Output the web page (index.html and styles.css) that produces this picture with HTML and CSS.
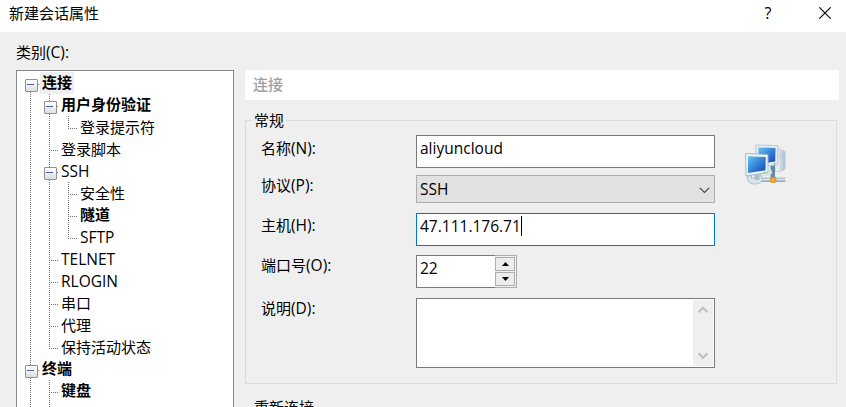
FILE: index.html
```html
<!DOCTYPE html>
<html lang="zh-CN">
<head>
<meta charset="utf-8">
<title>新建会话属性</title>
<link rel="stylesheet" href="styles.css">
</head>
<body>
<div class="dialog">
  <header class="titlebar">
    <span class="title">新建会话属性</span>
    <span class="help">?</span>
    <svg class="close" width="12" height="12" viewBox="0 0 12 12"><path d="M0.3 0.3L11.7 11.7M11.7 0.3L0.3 11.7" fill="none" stroke="#000" stroke-width="1.1"/></svg>
  </header>
  <main class="body">
    <section class="side">
      <div class="side-label">类别<span class="lat">(C):</span></div>
      <div class="tree">
        <div class="row"><i class="cell box first"></i><span class="name bold selected">连接</span></div>
        <div class="row"><i class="cell v"></i><i class="cell box"></i><span class="name bold">用户身份验证</span></div>
        <div class="row"><i class="cell v"></i><i class="cell v"></i><i class="cell l"></i><span class="name">登录提示符</span></div>
        <div class="row"><i class="cell v"></i><i class="cell v h"></i><span class="name">登录脚本</span></div>
        <div class="row"><i class="cell v"></i><i class="cell box"></i><span class="name lat">SSH</span></div>
        <div class="row"><i class="cell v"></i><i class="cell v"></i><i class="cell v h"></i><span class="name">安全性</span></div>
        <div class="row"><i class="cell v"></i><i class="cell v"></i><i class="cell v h"></i><span class="name bold">隧道</span></div>
        <div class="row"><i class="cell v"></i><i class="cell v"></i><i class="cell l"></i><span class="name lat">SFTP</span></div>
        <div class="row"><i class="cell v"></i><i class="cell v h"></i><span class="name lat">TELNET</span></div>
        <div class="row"><i class="cell v"></i><i class="cell v h"></i><span class="name lat">RLOGIN</span></div>
        <div class="row"><i class="cell v"></i><i class="cell v h"></i><span class="name">串口</span></div>
        <div class="row"><i class="cell v"></i><i class="cell v h"></i><span class="name">代理</span></div>
        <div class="row"><i class="cell v"></i><i class="cell l"></i><span class="name">保持活动状态</span></div>
        <div class="row"><i class="cell box"></i><span class="name bold">终端</span></div>
        <div class="row"><i class="cell v"></i><i class="cell v h"></i><span class="name bold">键盘</span></div>
        <div class="row"><i class="cell v"></i><i class="cell v"></i></div>
      </div>
    </section>
    <section class="page">
      <div class="heading">连接</div>
      <div class="group">
        <div class="legend">常规</div>
        <div class="form">
          <div class="labels">
            <span class="label">名称<span class="lat">(N):</span></span>
            <span class="label protocol">协议<span class="lat">(P):</span></span>
            <span class="label host">主机<span class="lat">(H):</span></span>
            <span class="label port">端口号<span class="lat">(O):</span></span>
            <span class="label desc">说明<span class="lat">(D):</span></span>
          </div>
          <div class="fields">
            <div class="field lat">aliyuncloud</div>
            <div class="field select lat"><span>SSH</span>
              <svg width="11" height="7" viewBox="0 0 11 7"><path d="M.8.8L5.5 5.5L10.2.8" fill="none" stroke="#444" stroke-width="1.2"/></svg>
            </div>
            <div class="field focus lat"><span>47.111.176.71</span><i class="caret"></i></div>
            <div class="field spin lat"><span class="value">22</span>
              <div class="buttons">
                <i class="btn"><svg width="7" height="4" viewBox="0 0 7 4"><path d="M0 4L3.5 0L7 4Z"/></svg></i>
                <i class="btn"><svg width="7" height="4" viewBox="0 0 7 4"><path d="M0 0H7L3.5 4Z"/></svg></i>
              </div>
            </div>
            <div class="field area">
              <div class="scroll">
                <svg width="10" height="8" viewBox="0 0 10 8"><path d="M.5 6.3L5 1.8L9.5 6.3" fill="none" stroke="#bfbfbf" stroke-width="2.2"/></svg>
                <svg width="10" height="8" viewBox="0 0 10 8"><path d="M.5 1.3L5 5.8L9.5 1.3" fill="none" stroke="#bfbfbf" stroke-width="2.2"/></svg>
              </div>
            </div>
          </div>
          <svg class="computers" width="41" height="42" viewBox="0.5 0 41 42">
            <defs>
              <linearGradient id="screen" x1="0" y1="0" x2="1" y2="1"><stop offset="0" stop-color="#62c5ee"/><stop offset=".5" stop-color="#3483d8"/><stop offset="1" stop-color="#173fb5"/></linearGradient>
              <linearGradient id="tower" x1="0" y1="0" x2="1" y2="0"><stop offset="0" stop-color="#fafdff"/><stop offset="1" stop-color="#aebdca"/></linearGradient>
              <linearGradient id="pipe" x1="0" y1="0" x2="0" y2="1"><stop offset="0" stop-color="#8ea4b4"/><stop offset=".4" stop-color="#e2ebf1"/><stop offset="1" stop-color="#71899c"/></linearGradient>
            </defs>
            <path d="M33 5L39 6.5L40.5 8V25L35 28L31 27Z" fill="url(#tower)" stroke="#b4c2ce" stroke-width=".7"/>
            <path d="M34.5 11L39.5 11M34.5 14L39.5 14" stroke="#b5c5d2" stroke-width=".8"/>
            <path d="M26 21H30.5V34H26Z" fill="#648ba6"/>
            <path d="M11.5 1L33.5 1.7L33 20.5L11.5 24Z" fill="#e8f0f3" stroke="#a9bdca" stroke-width=".8"/>
            <path d="M14 3.5L31 4L30.7 17.5L14 20Z" fill="url(#screen)"/>
            <path d="M4 30C1 36 5 40 10 40C16 40 19 37 17 33L16 29H11V34H7V30Z" fill="#d9e3e9" stroke="#9eb1bd" stroke-width=".8"/>
            <path d="M10 29H15V36H10Z" fill="#a9c0cd"/>
            <path d="M18 29L26 25L28 29L24 32H18Z" fill="#dbe4e8"/>
            <rect x="17" y="33.8" width="24" height="4" rx="1" fill="url(#pipe)"/>
            <path d="M1 9.5L23.5 10.5L23.5 28.5L1.5 32Z" fill="#edf4f6" stroke="#a0b5c2" stroke-width=".9"/>
            <path d="M3.5 12.3L21.2 13L21 26.2L3.5 29Z" fill="url(#screen)"/>
            <path d="M19 28.5L21 28M29 19.7L31 19.3" stroke="#7bd52c" stroke-width="1.2"/>
            <rect x="26" y="33" width="5.5" height="5.5" rx="1" fill="#f49a12" stroke="#b78740" stroke-width=".5"/>
            <path d="M27 35H30V37H27Z" fill="#ffb91b"/>
          </svg>
        </div>
      </div>
      <div class="next-group"><span class="next-title">重新连接</span></div>
    </section>
  </main>
</div>
</body>
</html>
```
FILE: styles.css
```css
* { box-sizing: border-box; }
body {
  margin: 0;
  overflow: hidden;
  background: #efefef;
  color: #000;
  font: 15px/22px "Noto Sans CJK SC", sans-serif;
}
svg { display: block; }
i { font-style: normal; }
.lat { font-family: "Open Sans", "Noto Sans CJK SC", sans-serif; font-size: 15.5px; }
.dialog { height: 407px; display: flex; flex-direction: column; overflow: hidden; }
.titlebar {
  height: 32px;
  flex: none;
  display: flex;
  align-items: center;
  background: #fff;
  padding: 0 15px 6px 9px;
}
.title { flex: 1; }
.help { width: 10px; margin-right: 46px; text-align: center; font-family: "Open Sans", sans-serif; font-size: 16px; }
.body { flex: 1; min-height: 0; display: flex; padding-left: 16px; }
.side { width: 218px; flex: none; display: flex; flex-direction: column; }
.side-label { height: 38px; flex: none; padding-top: 9px; }
.tree {
  flex: 1;
  min-height: 0;
  overflow: hidden;
  background: #fff;
  border: 1px solid #828790;
  border-bottom: 0;
  padding: 1px 0 0 4px;
}
.row { display: flex; height: 22px; white-space: nowrap; }
.name { padding: 0 2px; line-height: 22px; }
.bold { font-weight: 700; line-height: 20px; }
.selected { background: #efefef; }
.cell {
  --vert: repeating-linear-gradient(to bottom, #777 0 1px, transparent 1px 2px);
  --horz: repeating-linear-gradient(to right, #777 0 1px, transparent 1px 2px);
  width: 19px;
  height: 22px;
  flex: none;
  background-repeat: no-repeat;
}
.v { background-image: var(--vert); background-size: 1px 22px; background-position: 9px 0; }
.v.h {
  background-image: var(--vert), var(--horz);
  background-size: 1px 22px, 9px 1px;
  background-position: 9px 0, 9px 12px;
}
.l {
  background-image: var(--vert), var(--horz);
  background-size: 1px 13px, 9px 1px;
  background-position: 9px 0, 9px 12px;
}
.box {
  display: flex;
  padding: 7px 0 0 4px;
  background-image: var(--vert), var(--horz);
  background-size: 1px 22px, 4px 1px;
  background-position: 9px 0, 15px 12px;
}
.box.first { background-size: 1px 8px, 4px 1px; background-position: 9px 14px, 15px 12px; }
.box::before {
  content: "";
  width: 11px;
  height: 11px;
  border: 1px solid #919191;
  border-radius: 1px;
  background: linear-gradient(#4b63a7, #4b63a7) 1px 4px / 7px 1px no-repeat, linear-gradient(#fff, #dedede);
}
.page { width: 594px; margin-left: 11px; padding-top: 38px; }
.heading { height: 30px; padding: 3px 8px; background: #fff; color: #a0a0a0; font-weight: 500; }
.group { height: 264px; margin-top: 20px; width: 592px; border: 1px solid #dcdcdc; }
.legend { width: 34px; height: 22px; margin: -12px 0 0 6px; padding-left: 2px; background: #efefef; }
.form { display: flex; padding: 4px 0 0 15px; }
.labels { width: 155px; display: flex; flex-direction: column; padding-top: 2px; }
.label { height: 22px; }
.protocol { margin-top: 15px; }
.host { margin-top: 18px; }
.port { margin-top: 18px; }
.desc { margin-top: 21px; }
.fields { width: 299px; }
.field { display: flex; height: 33px; padding: 1px 3px; background: #fff; border: 1px solid #7a7a7a; }
.select {
  height: 28px;
  margin: 7px 0 10px;
  padding: 2px 4px 0 3px;
  justify-content: space-between;
  background: #e1e1e1;
  border-color: #adadad;
}
.select svg { margin-top: 9px; }
.focus { border-color: #0078d7; }
.caret { width: 1px; height: 20px; margin-top: 1px; background: #000; }
.spin { width: 101px; margin: 9px 0 10px; padding: 0 0 0 3px; border-right: 0; }
.value { flex: 1; padding-top: 1px; }
.buttons {
  width: 22px;
  height: 33px;
  margin-top: -1px;
  display: flex;
  flex-direction: column;
  gap: 1px;
  padding: 1px 1px 1px 0;
  background: #efefef;
  border: 1px solid #adadad;
  border-left: 0;
}
.btn { flex: 1; display: grid; place-items: center; background: #ececec; border: 1px solid #adadad; }
.area { height: 70px; padding: 1px; justify-content: flex-end; }
.scroll {
  width: 20px;
  display: flex;
  flex-direction: column;
  align-items: center;
  justify-content: space-between;
  padding: 6px 0;
  background: #efefef;
}
.computers { margin: 9px 0 0 30px; }
.next-group { padding: 12px 0 0 9px; height: 34px; }
```
